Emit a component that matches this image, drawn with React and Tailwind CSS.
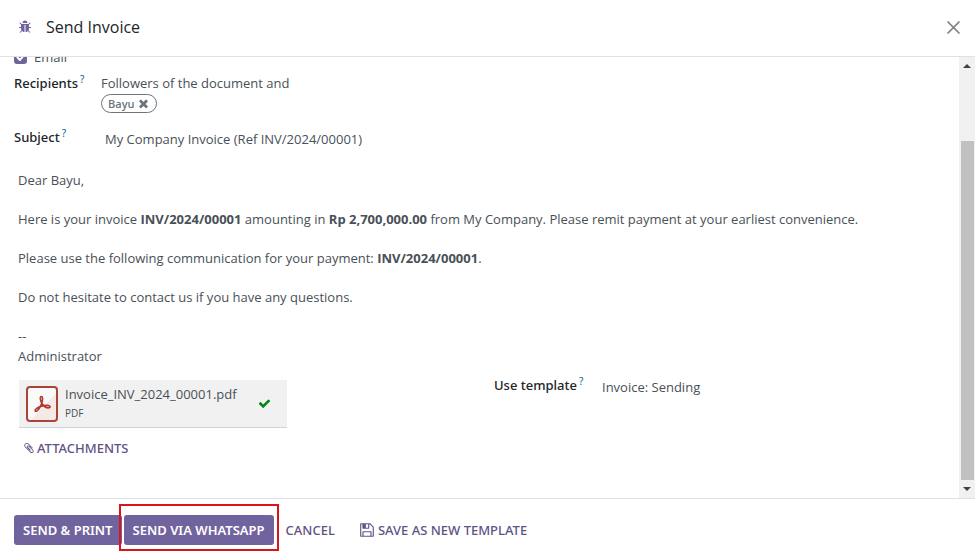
const ICONS = {
  bug: "M1696 960q0 26-19 45t-45 19h-224q0 171-67 290l208 209q19 19 19 45t-19 45q-18 19-45 19t-45-19l-198-197q-5 5-15 13t-42 28.5-65 36.5-82 29-97 13v-896h-128v896q-51 0-101.5-13.5t-87-33-66-39-43.5-32.5l-15-14-183 207q-20 21-48 21-24 0-43-16-19-18-20.5-44.5t15.5-46.5l202-227q-58-114-58-274h-224q-26 0-45-19t-19-45 19-45 45-19h224v-294l-173-173q-19-19-19-45t19-45 45-19 45 19l173 173h844l173-173q19-19 45-19t45 19 19 45-19 45l-173 173v294h224q26 0 45 19t19 45zm-480-576h-640q0-133 93.5-226.5t226.5-93.5 226.5 93.5 93.5 226.5z",
  times: "M1490 1322q0 40-28 68l-136 136q-28 28-68 28t-68-28l-294-294-294 294q-28 28-68 28t-68-28l-136-136q-28-28-28-68t28-68l294-294-294-294q-28-28-28-68t28-68l136-136q28-28 68-28t68 28l294 294 294-294q28-28 68-28t68 28l136 136q28 28 28 68t-28 68l-294 294 294 294q28 28 28 68z",
  check: "M1671 566q0 40-28 68l-724 724-136 136q-28 28-68 28t-68-28l-136-136-362-362q-28-28-28-68t28-68l136-136q28-28 68-28t68 28l294 295 656-657q28-28 68-28t68 28l136 136q28 28 28 68z",
  floppy: "M512 1536h768v-384h-768v384zm896 0h128v-896q0-14-10-38.5t-20-34.5l-281-281q-10-10-34-20t-39-10v416q0 40-28 68t-68 28h-576q-40 0-68-28t-28-68v-416h-128v1280h128v-416q0-40 28-68t68-28h832q40 0 68 28t28 68v416zm-384-928v-320q0-13-9.5-22.5t-22.5-9.5h-192q-13 0-22.5 9.5t-9.5 22.5v320q0 13 9.5 22.5t22.5 9.5h192q13 0 22.5-9.5t9.5-22.5zm640 32v928q0 40-28 68t-68 28h-1344q-40 0-68-28t-28-68v-1344q0-40 28-68t68-28h928q40 0 88 20t76 48l280 280q28 28 48 76t20 88z",
  paperclip: "M1596 1385q0 117-79 196t-196 79q-135 0-235-100l-777-776q-113-115-113-271 0-159 110-270t269-111q158 0 273 113l605 606q10 10 10 22 0 16-30.5 46.5t-46.5 30.5q-13 0-23-10l-606-607q-79-77-181-77-106 0-179 75t-73 181q0 105 76 181l776 777q63 63 145 63 64 0 106-42t42-106q0-82-63-145l-581-581q-26-24-60-24-29 0-48 19t-19 48q0 32 25 59l410 410q10 10 10 22 0 16-31 47t-47 31q-12 0-22-10l-410-410q-63-61-63-149 0-82 57-139t139-57q88 0 149 63l581 581q100 98 100 235z",
};

function Icon({ name, className }) {
  return (
    <svg viewBox="0 0 1792 1792" className={className} fill="currentColor" aria-hidden="true">
      <path d={ICONS[name]} />
    </svg>
  );
}

function PdfIcon() {
  return (
    <svg viewBox="0 0 32 36" className="h-9 w-8 shrink-0" fill="none" aria-hidden="true">
      <rect x="1" y="1" width="30" height="34" rx="3" fill="#fbfafa" />
      <path d="M31 4v28q0 3-3 3H4L31 6z" fill="#f5e9e8" />
      <rect x="1" y="1" width="30" height="34" rx="3" stroke="#a94438" strokeWidth="2" />
      <path
        d="M15.500 10.500c-2.200 0-1 4.500.5 7 1.700 3 4.500 4.500 7 4.300 2-.3 1.300-2.300-1.500-2.400-4-.1-8 1.100-10.800 3-2.500 1.700-1.700 3.700 0 2.700 2-1.300 4.500-6 5.500-9.600.6-2.300.6-5-.7-5z"
        stroke="#b23a2e"
        strokeWidth="1.600"
      />
    </svg>
  );
}

function FieldLabel({ htmlFor, children }) {
  return (
    <label
      htmlFor={htmlFor}
      className="flex items-start gap-[2px] font-['Noto_Sans','Open_Sans',sans-serif] font-medium text-[#212529]"
    >
      {children}
      <span className="text-[10px] leading-3 font-normal text-[#01668a]">?</span>
    </label>
  );
}

function Scrollbar() {
  return (
    <div className="flex w-4 shrink-0 flex-col items-center bg-[#f1f1f1]" aria-hidden="true">
      <svg viewBox="0 0 16 18" className="h-[18px] w-4">
        <path d="M4 11h8L8 7z" fill="#404040" />
      </svg>
      <div className="w-full grow-[66]" />
      <div className="w-[13px] grow-[340] bg-[#c1c1c1]" />
      <svg viewBox="0 0 16 18" className="h-[18px] w-4">
        <path d="M4 7h8l-4 4z" fill="#404040" />
      </svg>
    </div>
  );
}

export default function App() {
  return (
    <div className="flex h-screen flex-col bg-white font-['Open_Sans','Noto_Sans',sans-serif] text-[13px] leading-5 text-[#495057]">
      <header className="flex h-[57px] shrink-0 items-center border-b border-[#dee2e6] pr-[11px] pb-[2px] pl-[18px]">
        <button type="button" aria-label="Debug" className="text-[#71639e]">
          <Icon name="bug" className="h-[14px] w-[14px]" />
        </button>
        <h1 className="ml-[14px] text-base font-medium text-[#212529]">Send Invoice</h1>
        <button type="button" aria-label="Close" className="ml-auto p-1 text-[#7f7f7f]">
          <svg viewBox="0 0 13 13" className="h-[13px] w-[13px]" stroke="currentColor" strokeWidth="1.700" strokeLinecap="round">
            <path d="M1 1l11 11M12 1L1 12" />
          </svg>
        </button>
      </header>

      <div className="flex min-h-0 flex-1">
        <main className="min-w-0 flex-1 overflow-hidden px-[14px]">
          <label className="relative -mt-[10px] flex items-center gap-[7px] text-[#495057]">
            <input
              type="checkbox"
              defaultChecked
              className="h-[13px] w-[13px] appearance-none rounded-[3px] bg-[#71639e]"
            />
            <svg
              viewBox="0 0 13 13"
              className="pointer-events-none absolute left-0 h-[13px] w-[13px]"
              fill="none"
              stroke="white"
              strokeWidth="2"
              strokeLinecap="round"
              strokeLinejoin="round"
              aria-hidden="true"
            >
              <path d="M3.500 6.500l2.500 2.500 4-5" />
            </svg>
            Email
          </label>

          <div className="mt-[6px] grid grid-cols-[87px_1fr]">
            <FieldLabel htmlFor="recipient-remove">Recipients</FieldLabel>
            <div>
              <div>Followers of the document and</div>
              <span className="mt-px flex h-[19px] w-fit items-center gap-[2px] rounded-full border border-[#6c757d] px-[6px] text-[11px] font-semibold text-[#6c757d]">
                Bayu
                <button id="recipient-remove" type="button" aria-label="Remove Bayu">
                  <Icon name="times" className="h-[13px] w-[13px]" />
                </button>
              </span>
            </div>
          </div>

          <div className="mt-[14px] grid grid-cols-[91px_1fr]">
            <FieldLabel htmlFor="subject">Subject</FieldLabel>
            <input
              id="subject"
              type="text"
              defaultValue="My Company Invoice (Ref INV/2024/00001)"
              className="mt-[2px] h-5 bg-transparent outline-none"
            />
          </div>

          <div className="mt-[21px] flex flex-col gap-[19px] px-1">
            <p>Dear Bayu,</p>
            <p>
              Here is your invoice <b>INV/2024/00001</b> amounting in <b>Rp 2,700,000.00</b> from My Company. Please
              remit payment at your earliest convenience.
            </p>
            <p>
              Please use the following communication for your payment: <b>INV/2024/00001</b>.
            </p>
            <p>Do not hesitate to contact us if you have any questions.</p>
            <p>
              --
              <br />
              Administrator
            </p>
          </div>

          <div className="mt-[9px] grid grid-cols-[480px_1fr]">
            <div className="pt-[5px] pl-[5px]">
              <div className="flex h-12 w-[268px] items-center border-b border-[#ced4da] bg-[#f1f1f1] pr-4 pl-[7px]">
                <PdfIcon />
                <div className="ml-[7px] flex-1 pb-px">
                  <div>Invoice_INV_2024_00001.pdf</div>
                  <div className="text-[10px] leading-[18px]">PDF</div>
                </div>
                <Icon name="check" className="h-[13px] w-[13px] text-[#008818]" />
              </div>
              <button
                type="button"
                className="mt-[10px] ml-1 flex items-center gap-[2px] font-['Noto_Sans','Open_Sans',sans-serif] font-medium text-[#5f5386]"
              >
                <Icon name="paperclip" className="h-3 w-3" />
                ATTACHMENTS
              </button>
            </div>
            <div className="grid grid-cols-[108px_1fr] items-start">
              <FieldLabel htmlFor="template">Use template</FieldLabel>
              <select id="template" className="mt-[2px] h-5 appearance-none bg-transparent outline-none">
                <option>Invoice: Sending</option>
              </select>
            </div>
          </div>
        </main>
        <Scrollbar />
      </div>

      <footer className="flex shrink-0 items-center border-t border-[#dee2e6] px-[14px] pt-4 pb-3 font-['Noto_Sans','Open_Sans',sans-serif] font-medium text-[#5f5386]">
        <button type="button" className="h-[30px] rounded-[3px] bg-[#71639e] px-[9px] font-semibold text-white">
          SEND &amp; PRINT
        </button>
        <div className="relative ml-[2px]">
          <button type="button" className="h-[30px] rounded-[3px] bg-[#71639e] px-[9px] font-semibold text-white">
            SEND VIA WHATSAPP
          </button>
          <div className="pointer-events-none absolute -inset-x-[5px] -top-[11px] -bottom-[6px] border-2 border-[#d9141c]" />
        </div>
        <button type="button" className="ml-3">
          CANCEL
        </button>
        <button type="button" className="ml-6 flex items-center gap-[3px]">
          <Icon name="floppy" className="h-4 w-4" />
          SAVE AS NEW TEMPLATE
        </button>
      </footer>
    </div>
  );
}
